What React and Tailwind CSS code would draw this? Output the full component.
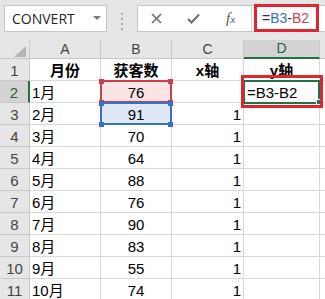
import React from 'react'

const rows = [
  { n: 4, a: '3月', b: 70 },
  { n: 5, a: '4月', b: 64 },
  { n: 6, a: '5月', b: 88 },
  { n: 7, a: '6月', b: 76 },
  { n: 8, a: '7月', b: 90 },
  { n: 9, a: '8月', b: 83 },
  { n: 10, a: '9月', b: 55 },
  { n: 11, a: '10月', b: 74 },
]

const font = { fontFamily: '"Liberation Sans", "Noto Sans CJK SC", sans-serif' }

function Toolbar() {
  return (
    <div className="flex h-[40px] items-start bg-[#e6e6e6] pt-[5px]">
      {/* name box */}
      <div className="ml-[4px] flex h-[27px] w-[103px] items-center justify-between border border-[#c6c6c6] bg-white pl-[7px] pr-[5px]">
        <span className="text-[14px] text-[#262626]" style={{ fontFamily: '"Open Sans", sans-serif' }}>CONVERT</span>
        <svg width="8" height="5" viewBox="0 0 8 5">
          <polygon points="0,0 8,0 4,4" fill="#7a7a7a" />
        </svg>
      </div>
      {/* splitter dots */}
      <div className="ml-[14px] mt-[8px] flex flex-col gap-[3px]">
        <span className="h-[2px] w-[2px] bg-[#aaaaaa]" />
        <span className="h-[2px] w-[2px] bg-[#aaaaaa]" />
        <span className="h-[2px] w-[2px] bg-[#aaaaaa]" />
        <span className="h-[2px] w-[2px] bg-[#aaaaaa]" />
      </div>
      {/* formula bar */}
      <div className="ml-[14px] flex h-[27px] flex-1 border-y border-l border-[#c6c6c6] bg-white">
        <div className="flex w-[37px] items-center justify-center">
          <svg width="11" height="11" viewBox="0 0 11 11">
            <path d="M1 1L10 10M10 1L1 10" stroke="#6e6e6e" strokeWidth="1.6" />
          </svg>
        </div>
        <div className="flex w-[37px] items-center justify-center">
          <svg width="13" height="11" viewBox="0 0 13 11">
            <path d="M1 6L4.5 9.5L12 1.5" stroke="#6e6e6e" strokeWidth="2" fill="none" />
          </svg>
        </div>
        <div className="flex w-[37px] items-center justify-center">
          <span className="text-[15px] italic text-[#555]" style={{ fontFamily: '"Liberation Serif", serif' }}>
            f<span className="text-[11px]">x</span>
          </span>
        </div>
        <div className="ml-[2px] flex flex-1 items-start border-l border-[#d4d4d4]">
          <div className="-mt-[2px] ml-[2px] flex h-[28px] w-[65px] items-center border-[3px] border-[#e1242d] pl-[5px] text-[14px]" style={font}>
            <span className="text-[#333]">=</span>
            <span className="text-[#3a6fc6]">B3</span>
            <span className="text-[#333]">-</span>
            <span className="text-[#c8414b]">B2</span>
          </div>
        </div>
      </div>
    </div>
  )
}

function HeaderRow() {
  return (
    <div className="flex h-[19px] text-[14px] text-[#444]" style={font}>
      <div className="relative w-[30px] border-b border-r border-[#c8c8c8] bg-[#e6e6e6]">
        <svg className="absolute left-[14px] top-[6px]" width="12" height="11" viewBox="0 0 12 11">
          <polygon points="12,0 12,11 0,11" fill="#b5b5b5" />
        </svg>
      </div>
      <div className="flex w-[71px] items-end justify-center border-b border-r border-[#c8c8c8] bg-[#e6e6e6] leading-[18px]">A</div>
      <div className="flex w-[71px] items-end justify-center border-b border-r border-[#c8c8c8] bg-[#e6e6e6] leading-[18px]">B</div>
      <div className="flex w-[72px] items-end justify-center border-b border-r border-[#c8c8c8] bg-[#e6e6e6] leading-[18px]">C</div>
      <div className="flex w-[76px] items-end justify-center border-b-2 border-r border-b-[#217346] border-r-[#c8c8c8] bg-[#d3d3d3] leading-[17px] text-[#2a5e40]">D</div>
      <div className="flex-1 border-b border-[#c8c8c8] bg-[#e6e6e6]" />
    </div>
  )
}

export default function App() {
  return (
    <div className="h-[299px] w-[325px] overflow-hidden bg-white" style={font}>
      <Toolbar />
      <HeaderRow />

      {/* row 1 */}
      <div className="flex h-[22px] text-[15px] leading-[18px] text-black">
        <div className="flex w-[30px] items-end justify-center border-b border-r border-[#c8c8c8] bg-[#e6e6e6] text-[#444]">1</div>
        <div className="flex w-[71px] items-end justify-center border-b border-r border-[#d9d9d9] font-bold">月份</div>
        <div className="flex w-[71px] items-end justify-center border-b border-r border-[#d9d9d9] font-bold">获客数</div>
        <div className="flex w-[72px] items-end justify-center border-b border-r border-[#d9d9d9] font-bold">x轴</div>
        <div className="flex w-[76px] items-end justify-center border-b border-r border-[#d9d9d9] font-bold">y轴</div>
        <div className="flex-1 border-b border-[#d9d9d9]" />
      </div>

      {/* row 2 */}
      <div className="flex h-[22px] text-[15px] leading-[18px] text-black">
        <div className="flex w-[30px] items-end justify-center border-b border-r-2 border-b-[#c8c8c8] border-r-[#217346] bg-[#d3d3d3] text-[#2a5e40]">2</div>
        <div className="flex w-[71px] items-end border-b border-r border-[#d9d9d9] pl-[2px]">1月</div>
        <div className="relative flex w-[71px] items-end justify-center border-b border-r border-[#d9d9d9] bg-[#fbe4e5]">
          <div className="absolute -left-[1px] -top-[1px] h-[23px] w-[72px] border-2 border-[#c8414b]" />
          <span className="absolute -left-[2px] -top-[2px] h-[5px] w-[5px] bg-[#c8414b]" />
          <span className="absolute -right-[2px] -top-[2px] h-[5px] w-[5px] bg-[#c8414b]" />
          <span className="absolute -bottom-[3px] -left-[2px] h-[5px] w-[5px] bg-[#c8414b]" />
          <span className="absolute -bottom-[3px] -right-[2px] h-[5px] w-[5px] bg-[#c8414b]" />
          <span className="relative">76</span>
        </div>
        <div className="w-[72px] border-b border-r border-[#d9d9d9]" />
        <div className="relative flex w-[76px] items-end border-b border-r border-[#d9d9d9] pl-[3px]">
          <div className="absolute -left-[1px] -top-[1px] h-[24px] w-[77px] border-2 border-[#217346]" />
          <span className="absolute -bottom-[3px] -right-[3px] h-[6px] w-[6px] border border-white bg-[#217346]" />
          <div className="absolute -left-[3px] -top-[6px] z-10 h-[33px] w-[82px] border-[3px] border-[#e1242d]" />
          <span className="relative">=B3-B2</span>
        </div>
        <div className="flex-1 border-b border-[#d9d9d9]" />
      </div>

      {/* row 3 */}
      <div className="flex h-[22px] text-[15px] leading-[18px] text-black">
        <div className="flex w-[30px] items-end justify-center border-b border-r border-[#c8c8c8] bg-[#e6e6e6] text-[#444]">3</div>
        <div className="flex w-[71px] items-end border-b border-r border-[#d9d9d9] pl-[2px]">2月</div>
        <div className="relative flex w-[71px] items-end justify-center border-b border-r border-[#d9d9d9] bg-[#dfe9f6]">
          <div className="absolute -left-[1px] -top-[1px] h-[23px] w-[72px] border-2 border-[#3a6fc6]" />
          <span className="absolute -left-[2px] -top-[2px] h-[5px] w-[5px] bg-[#3a6fc6]" />
          <span className="absolute -right-[2px] -top-[2px] h-[5px] w-[5px] bg-[#3a6fc6]" />
          <span className="absolute -bottom-[3px] -left-[2px] h-[5px] w-[5px] bg-[#3a6fc6]" />
          <span className="absolute -bottom-[3px] -right-[2px] h-[5px] w-[5px] bg-[#3a6fc6]" />
          <span className="relative">91</span>
        </div>
        <div className="flex w-[72px] items-end justify-end border-b border-r border-[#d9d9d9] pr-[2px]">1</div>
        <div className="w-[76px] border-b border-r border-[#d9d9d9]" />
        <div className="flex-1 border-b border-[#d9d9d9]" />
      </div>

      {rows.map(r => (
        <div key={r.n} className="flex h-[22px] text-[15px] leading-[18px] text-black">
          <div className="flex w-[30px] items-end justify-center border-b border-r border-[#c8c8c8] bg-[#e6e6e6] text-[#444]">{r.n}</div>
          <div className="flex w-[71px] items-end border-b border-r border-[#d9d9d9] pl-[2px]">{r.a}</div>
          <div className="flex w-[71px] items-end justify-center border-b border-r border-[#d9d9d9]">{r.b}</div>
          <div className="flex w-[72px] items-end justify-end border-b border-r border-[#d9d9d9] pr-[2px]">1</div>
          <div className="w-[76px] border-b border-r border-[#d9d9d9]" />
          <div className="flex-1 border-b border-[#d9d9d9]" />
        </div>
      ))}
    </div>
  )
}
